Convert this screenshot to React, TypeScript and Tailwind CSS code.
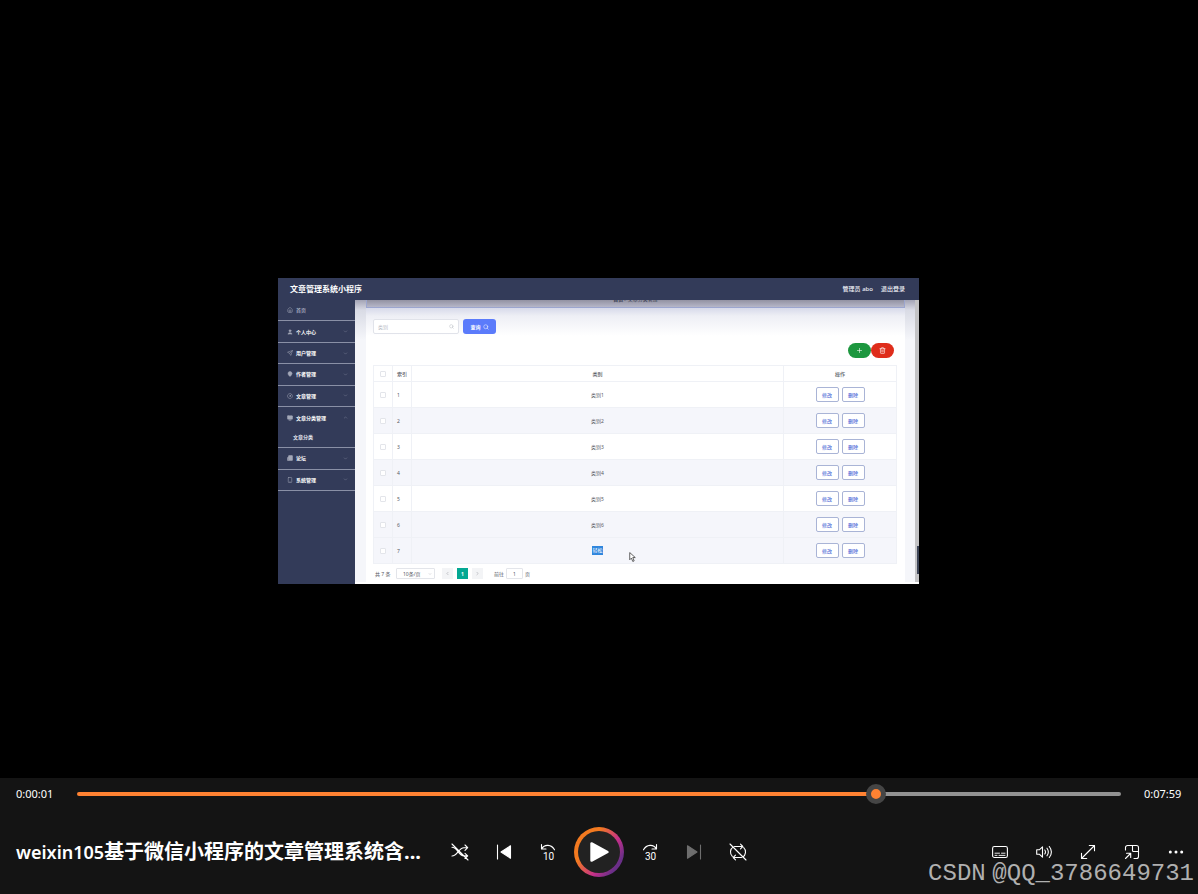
import { useState } from "react";
import type { ReactNode } from "react";
import {
  ChevronDown,
  ChevronLeft,
  ChevronRight,
  ChevronUp,
  House,
  MapPin,
  Monitor,
  Plus,
  Search,
  Send,
  Smartphone,
  Trash2,
  User,
  Newspaper,
  CircleGauge,
} from "lucide-react";
import type { LucideIcon } from "lucide-react";

type MenuItem = {
  label: string;
  icon: LucideIcon;
  filled?: boolean;
  children?: string[];
  expandable?: boolean;
};

const DURATION = 479;

const menu: MenuItem[] = [
  { label: "首页", icon: House },
  { label: "个人中心", icon: User, filled: true, expandable: true },
  { label: "用户管理", icon: Send, expandable: true },
  { label: "作者管理", icon: MapPin, filled: true, expandable: true },
  { label: "文章管理", icon: CircleGauge, expandable: true },
  {
    label: "文章分类管理",
    icon: Monitor,
    filled: true,
    expandable: true,
    children: ["文章分类"],
  },
  { label: "论坛", icon: Newspaper, filled: true, expandable: true },
  { label: "系统管理", icon: Smartphone, expandable: true },
];

const categories = ["类别1", "类别2", "类别3", "类别4", "类别5", "类别6", "轻松"];

function Sidebar() {
  return (
    <aside className="w-[77px] shrink-0 bg-[#333b59]">
      <nav className="flex h-[191px] flex-col">
        {menu.map((item) => {
          const Chevron = item.children ? ChevronUp : ChevronDown;

          return (
            <div
              key={item.label}
              className={
                item.children ? "flex-[1_1_19px]" : "flex flex-[1_1_0px] flex-col"
              }
            >
              <a
                href="#"
                className={`flex items-center gap-[3px] pr-[7px] pl-[9px] ${
                  item.children ? "h-[21px]" : "flex-1 border-b border-[#8a90a6]"
                }`}
              >
                <item.icon
                  size={6}
                  fill={item.filled ? "currentColor" : "none"}
                  className="text-[#a4a8b8]"
                />
                <span
                  className={`flex-1 whitespace-nowrap ${
                    item.expandable ? "font-bold text-white" : "text-[#d5d8e2]"
                  }`}
                >
                  {item.label}
                </span>
                {item.expandable ? (
                  <Chevron size={5} className="text-[#8a90a6]" />
                ) : null}
              </a>

              {item.children?.map((child) => (
                <a
                  key={child}
                  href="#"
                  className="flex h-5 items-center border-b border-[#8a90a6] pb-px pl-[15px] font-bold text-[#e4e6ee]"
                >
                  {child}
                </a>
              ))}
            </div>
          );
        })}
      </nav>
    </aside>
  );
}

function CategoryTable() {
  return (
    <table className="mt-[7px] w-full table-fixed border-collapse text-center text-[#55585f]">
      <colgroup>
        <col className="w-[19px]" />
        <col className="w-[19px]" />
        <col />
        <col className="w-[113px]" />
      </colgroup>
      <thead>
        <tr className="h-4">
          <th className="border border-[#eff1f6] p-0">
            <input
              type="checkbox"
              aria-label="全选"
              className="mx-auto block size-[6px] appearance-none rounded-[1px] border border-[#e3e5ea] bg-white"
            />
          </th>
          <th className="border border-[#eff1f6] p-0 font-medium">索引</th>
          <th className="border border-[#eff1f6] p-0 font-medium">类别</th>
          <th className="border border-[#eff1f6] p-0 font-medium">操作</th>
        </tr>
      </thead>
      <tbody>
        {categories.map((category, index) => {
          const last = index === categories.length - 1;

          return (
            <tr
              key={category}
              className={`h-[26px] ${index % 2 === 1 || last ? "bg-[#f5f6fb]" : "bg-white"}`}
            >
              <td className="border border-[#eff1f6] p-0">
                <input
                  type="checkbox"
                  aria-label={`选择 ${category}`}
                  className="mx-auto block size-[6px] appearance-none rounded-[1px] border border-[#e3e5ea] bg-white"
                />
              </td>
              <td className="border border-[#eff1f6] p-0 pl-1 text-left">
                {index + 1}
              </td>
              <td className="border border-[#eff1f6] p-0">
                {last ? (
                  <span className="inline-block bg-[#2f86dd] leading-[9px] text-white">
                    {category}
                  </span>
                ) : (
                  category
                )}
              </td>
              <td className="border border-[#eff1f6] p-0">
                <div className="flex justify-center gap-[3px]">
                  <button className="h-[15px] w-[23px] rounded-[2px] border border-[#a9b4d6] bg-white font-medium text-[#5570d8]">
                    修改
                  </button>
                  <button className="h-[15px] w-[23px] rounded-[2px] border border-[#a9b4d6] bg-white font-medium text-[#5570d8]">
                    删除
                  </button>
                </div>
              </td>
            </tr>
          );
        })}
      </tbody>
    </table>
  );
}

function Pagination() {
  return (
    <div className="mt-1 flex h-[11px] items-center pl-[2px] text-[#55585f]">
      <span className="w-[21px] whitespace-nowrap">共 7 条</span>
      <div className="relative h-[11px] w-[39px]">
        <select
          aria-label="每页条数"
          className="block h-full w-full appearance-none rounded-[1px] border border-[#e3e5ea] bg-white pl-[6px] leading-[8px]"
        >
          <option>10条/页</option>
        </select>
        <ChevronDown
          size={4}
          className="pointer-events-none absolute top-1 right-[3px] text-[#a5a8b0]"
        />
      </div>
      <button
        aria-label="上一页"
        className="ml-[7px] grid h-[11px] w-[11px] place-items-center bg-[#f3f4f6] text-[#85888f]"
      >
        <ChevronLeft size={5} />
      </button>
      <button className="ml-1 h-[11px] w-[11px] bg-[#04a893] font-bold text-white">
        1
      </button>
      <button
        aria-label="下一页"
        className="ml-1 grid h-[11px] w-[11px] place-items-center bg-[#f3f4f6] text-[#85888f]"
      >
        <ChevronRight size={5} />
      </button>
      <label className="ml-[11px] flex items-center gap-[2px]">
        前往
        <input
          defaultValue="1"
          className="h-[11px] w-[17px] rounded-[1px] border border-[#e3e5ea] bg-white text-center"
        />
        页
      </label>
    </div>
  );
}

function AdminPage() {
  return (
    <div className="flex w-full max-w-[641px] flex-col bg-white font-['Noto_Sans','Noto_Sans_CJK_SC',sans-serif] text-[5px] leading-[8px]">
      <header className="flex h-[22px] items-center bg-[#333b59] pr-[14px] pl-3 text-[6px] font-medium text-[#eef0f6]">
        <h1 className="flex-1 text-[8px] font-bold text-white">
          文章管理系统小程序
        </h1>
        <span className="mr-2">管理员 abo</span>
        <a href="#">退出登录</a>
      </header>

      <div className="flex h-[284px]">
        <Sidebar />
        <div className="flex min-w-0 flex-1 flex-col bg-[#f5f6fa] bg-[linear-gradient(to_bottom,#a3a4b5_0px,#d9dbe5_10px,#f5f6fa_40px)] pl-[11px]">
          <div className="flex min-h-0 flex-1">
            <main className="min-w-0 flex-1 bg-white">
              <div className="flex h-2 justify-center overflow-hidden border-x border-b border-[#9ca6cf] bg-linear-to-b from-[#9292a2] to-[#b6b7c8]">
                <p className="-mt-[5px] text-[#3a3e52]">
                  <b>首页</b> / 文章分类管理
                </p>
              </div>
              <div className="bg-[linear-gradient(to_bottom,#d7daea_0px,#eeeff5_8px,#ffffff_28px)] pt-[11px] pr-2 pl-[7px]">
                <form className="flex gap-1" onSubmit={(e) => e.preventDefault()}>
                  <label className="flex h-[15px] w-[86px] items-center rounded-[2px] border border-[#e1e3ea] bg-white px-1">
                    <input
                      aria-label="类别"
                      placeholder="类别"
                      className="min-w-0 flex-1 outline-none placeholder:text-[#b6b9c2]"
                    />
                    <Search size={5} className="text-[#b0b3bc]" />
                  </label>
                  <button className="flex h-[15px] w-[33px] items-center justify-center gap-[2px] rounded-[3px] bg-[#5b7bfb] font-bold text-white">
                    查询
                    <Search size={6} />
                  </button>
                </form>

                <div className="mt-[9px] flex justify-end pr-[3px]">
                  <button
                    aria-label="新增"
                    className="grid h-[15px] w-[23px] place-items-center rounded-full bg-[#1d973f] text-white"
                  >
                    <Plus size={7} />
                  </button>
                  <button
                    aria-label="删除"
                    className="grid h-[15px] w-[23px] place-items-center rounded-full bg-[#df2d1b] text-white"
                  >
                    <Trash2 size={7} />
                  </button>
                </div>

                <CategoryTable />
                <Pagination />
              </div>
            </main>
            <div className="w-[10px]" />
            <div className="flex w-1 flex-col justify-end bg-[#c3c3c5] pb-2">
              <div className="ml-[2px] h-7 bg-[#3c4456]" />
            </div>
          </div>
          <div className="-ml-[11px] h-[2px] bg-white" />
        </div>
      </div>
    </div>
  );
}

function ControlButton({
  label,
  disabled,
  children,
}: {
  label: string;
  disabled?: boolean;
  children: ReactNode;
}) {
  return (
    <button
      aria-label={label}
      disabled={disabled}
      className="grid h-11 w-11 place-items-center text-white disabled:text-[#6e6e6e]"
    >
      <svg
        viewBox="0 0 18 18"
        className="size-[18px]"
        fill="none"
        stroke="currentColor"
        strokeWidth="1.1"
        strokeLinecap="round"
        strokeLinejoin="round"
      >
        {children}
      </svg>
    </button>
  );
}

function Transport() {
  return (
    <div className="flex items-center">
      <ControlButton label="随机播放">
        <path d="M1 1l16 16M1 4.3c5.500 0 6.500 8.600 12 8.600h3.500M1 13c5.500 0 6.500-8.200 12-8.200h3.500M14 2l2.700 2.700L14 7.300M14 10.300l2.700 2.600L14 15.500" />
      </ControlButton>
      <ControlButton label="上一个">
        <path d="M2.500 2v14" />
        <path d="M15.500 2.800v12.400L6 9z" fill="currentColor" />
      </ControlButton>
      <ControlButton label="后退 10 秒">
        <path d="M2.500 1.500v4.500h4.500M2.700 5.700C5.500 1 12.500 1.200 15.500 6.800" />
        <text
          x="9.500"
          y="16.500"
          textAnchor="middle"
          fill="currentColor"
          stroke="none"
          className="font-['Roboto',sans-serif] text-[10px]"
        >
          10
        </text>
      </ControlButton>
      <button
        aria-label="播放"
        className="mx-1 grid size-[50px] place-items-center rounded-full bg-[linear-gradient(125deg,#f37a20_32%,#c4308a_62%,#6a2f88_82%)]"
      >
        <span className="grid size-[42px] place-items-center rounded-full bg-[#222222]">
          <svg viewBox="0 0 24 24" className="size-6 text-white">
            <path
              d="M4.500 3.400v17.200L20.500 12z"
              fill="currentColor"
              stroke="currentColor"
              strokeWidth="2.400"
              strokeLinejoin="round"
            />
          </svg>
        </span>
      </button>
      <ControlButton label="前进 30 秒">
        <path d="M15.500 1.500v4.500h-4.500M15.300 5.700C12.500 1 5.500 1.200 2.500 6.800" />
        <text
          x="9.500"
          y="16.500"
          textAnchor="middle"
          fill="currentColor"
          stroke="none"
          className="font-['Roboto',sans-serif] text-[10px]"
        >
          30
        </text>
      </ControlButton>
      <ControlButton label="下一个" disabled>
        <path d="M15.500 2v14" />
        <path d="M2.500 2.800v12.400L12 9z" fill="currentColor" />
      </ControlButton>
      <ControlButton label="重复: 关">
        <path d="M1 1l16 16M5.500 3.500h8M11.500 1.200l2.300 2.300-2.300 2.300M4.300 3.900A6 6 0 0 0 3.300 13.300M14.700 4.700a6 6 0 0 1-1 9.400M12.500 14.500h-8M6.500 12.200l-2.300 2.300 2.300 2.300" />
      </ControlButton>
    </div>
  );
}

function ExtraControls() {
  return (
    <div className="flex items-center justify-end">
      <ControlButton label="字幕">
        <rect x="1.600" y="3.500" width="14.800" height="11" rx="1.800" />
        <path d="M4 10.200h4.500M10.500 10.200h3.500M4 12.400h2M8 12.400h6" strokeWidth="0.900" />
      </ControlButton>
      <ControlButton label="音量">
        <path d="M1.700 6.800h2.600L7.500 3.800v10.400l-3.200-3H1.700zM9.800 7q1.400 2 0 4M12 5.200q2.700 3.800 0 7.600M14.300 3.500q4.200 5.500 0 11" />
      </ControlButton>
      <ControlButton label="全屏">
        <path d="M2.500 15.500l13-13M10.300 2.500h5.200v5.200M2.500 10.300v5.200h5.200" />
      </ControlButton>
      <ControlButton label="迷你播放器">
        <path d="M2.500 7V4.500a2 2 0 0 1 2-2h9a2 2 0 0 1 2 2v9a2 2 0 0 1-2 2H11M9.500 2.500v5a1 1 0 0 0 1 1h5M2.500 15.500l5-5M3.500 10.300h4.200v4.200" />
      </ControlButton>
      <ControlButton label="更多">
        <g fill="currentColor" stroke="none">
          <circle cx="3.300" cy="9" r="1.500" />
          <circle cx="9" cy="9" r="1.500" />
          <circle cx="14.700" cy="9" r="1.500" />
        </g>
      </ControlButton>
    </div>
  );
}

function SeekBar() {
  const [position, setPosition] = useState(369);
  const percent = (position / DURATION) * 100;

  return (
    <div className="flex h-8 items-center gap-[23px] px-4 text-[11px] text-white">
      <span className="w-[38px]">0:00:01</span>
      <input
        type="range"
        aria-label="播放进度"
        min={0}
        max={DURATION}
        value={position}
        onChange={(e) => setPosition(Number(e.target.value))}
        className="h-1 min-w-0 flex-1 appearance-none rounded-full bg-[#929292] [&::-webkit-slider-thumb]:size-5 [&::-webkit-slider-thumb]:appearance-none [&::-webkit-slider-thumb]:rounded-full [&::-webkit-slider-thumb]:border-[5px] [&::-webkit-slider-thumb]:border-[#454545] [&::-webkit-slider-thumb]:bg-[#ff8232]"
        style={{
          backgroundImage: `linear-gradient(to right, #ff8232 ${percent}%, transparent ${percent}%)`,
        }}
      />
      <span className="w-[38px]">0:07:59</span>
    </div>
  );
}

export default function App() {
  return (
    <div className="relative flex min-h-screen flex-col overflow-hidden bg-black font-['Noto_Sans','Noto_Sans_CJK_SC',sans-serif]">
      <section className="relative flex flex-1 items-center justify-center pt-[84px] pr-px">
        <AdminPage />
      </section>

      <footer className="bg-[#141414]">
        <SeekBar />
        <div className="grid h-[84px] grid-cols-[1fr_auto_1fr] items-center">
          <h2 className="truncate pr-2 pl-4 text-xl font-bold text-white">
            <span className="text-lg font-semibold">weixin105</span>
            基于微信小程序的文章管理系统含...
          </h2>
          <Transport />
          <ExtraControls />
        </div>
      </footer>

      <svg
        viewBox="0 0 12 18"
        aria-hidden="true"
        className="absolute top-[552px] left-[629px] h-[10px] w-[7px]"
      >
        <path
          d="M1 1v13l3-3 2.500 6 2.500-1-2.500-6H11z"
          fill="#fff"
          stroke="#444"
          strokeWidth="1.500"
        />
      </svg>

      <p className="absolute right-1 bottom-1 font-['Liberation_Mono',monospace] text-2xl text-[#b0b0b0]">
        CSDN<span className="font-['Liberation_Sans',sans-serif]"> </span>
        @QQ_3786649731
      </p>
    </div>
  );
}
